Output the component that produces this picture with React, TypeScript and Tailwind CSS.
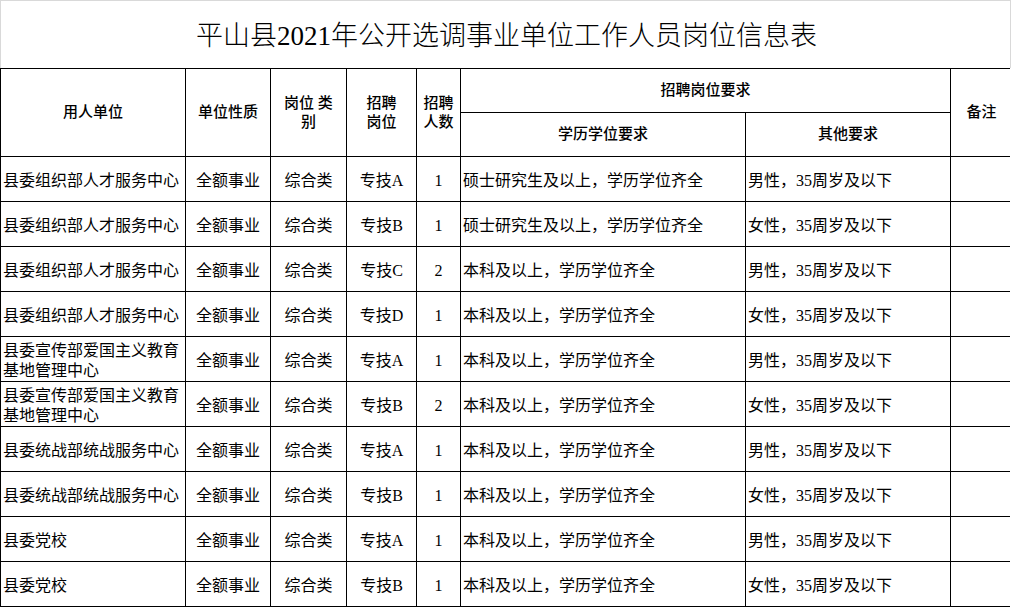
const font = { fontFamily: '"Liberation Serif", "Noto Sans CJK SC", serif' };

type Row = {
  unit: string;
  kind: string;
  cat: string;
  post: string;
  num: string;
  edu: string;
  other: string;
};

const edu1 = '硕士研究生及以上，学历学位齐全';
const edu2 = '本科及以上，学历学位齐全';

const rows: Row[] = [
  { unit: '县委组织部人才服务中心', kind: '全额事业', cat: '综合类', post: '专技A', num: '1', edu: edu1, other: '男性，35周岁及以下' },
  { unit: '县委组织部人才服务中心', kind: '全额事业', cat: '综合类', post: '专技B', num: '1', edu: edu1, other: '女性，35周岁及以下' },
  { unit: '县委组织部人才服务中心', kind: '全额事业', cat: '综合类', post: '专技C', num: '2', edu: edu2, other: '男性，35周岁及以下' },
  { unit: '县委组织部人才服务中心', kind: '全额事业', cat: '综合类', post: '专技D', num: '1', edu: edu2, other: '女性，35周岁及以下' },
  { unit: '县委宣传部爱国主义教育\n基地管理中心', kind: '全额事业', cat: '综合类', post: '专技A', num: '1', edu: edu2, other: '男性，35周岁及以下' },
  { unit: '县委宣传部爱国主义教育\n基地管理中心', kind: '全额事业', cat: '综合类', post: '专技B', num: '2', edu: edu2, other: '女性，35周岁及以下' },
  { unit: '县委统战部统战服务中心', kind: '全额事业', cat: '综合类', post: '专技A', num: '1', edu: edu2, other: '男性，35周岁及以下' },
  { unit: '县委统战部统战服务中心', kind: '全额事业', cat: '综合类', post: '专技B', num: '1', edu: edu2, other: '女性，35周岁及以下' },
  { unit: '县委党校', kind: '全额事业', cat: '综合类', post: '专技A', num: '1', edu: edu2, other: '男性，35周岁及以下' },
  { unit: '县委党校', kind: '全额事业', cat: '综合类', post: '专技B', num: '1', edu: edu2, other: '女性，35周岁及以下' },
];

const th = 'border border-black text-center align-middle text-[15px] leading-[19px] font-medium text-black';
const td = 'border border-black align-middle text-[16px] leading-[20px] text-black pt-[3px]';

export default function App() {
  return (
    <div className="w-[1011px] h-[607px] overflow-hidden bg-white" style={font}>
      <div className="h-[68px] w-[1011px] border-t border-l border-r border-[#d9d9d9] flex items-center justify-center">
        <h1 className="text-[27px] leading-none font-light text-black pt-[4px] pl-[2px]">平山县2021年公开选调事业单位工作人员岗位信息表</h1>
      </div>
      <div className="w-[1010px] overflow-hidden">
        <table className="table-fixed border-collapse w-[1012px]">
          <colgroup>
            <col className="w-[185px]" />
            <col className="w-[85px]" />
            <col className="w-[76px]" />
            <col className="w-[70px]" />
            <col className="w-[44px]" />
            <col className="w-[285px]" />
            <col className="w-[205px]" />
            <col className="w-[62px]" />
          </colgroup>
          <thead>
            <tr className="h-[44px]">
              <th rowSpan={2} className={th}>用人单位</th>
              <th rowSpan={2} className={th}>单位性质</th>
              <th rowSpan={2} className={th}>岗位 类<br />别</th>
              <th rowSpan={2} className={th}>招聘<br />岗位</th>
              <th rowSpan={2} className={th}>招聘<br />人数</th>
              <th colSpan={2} className={th}>招聘岗位要求</th>
              <th rowSpan={2} className={th}>备注</th>
            </tr>
            <tr className="h-[44px]">
              <th className={th}>学历学位要求</th>
              <th className={th}>其他要求</th>
            </tr>
          </thead>
          <tbody>
            {rows.map((r, i) => (
              <tr key={i} className="h-[45px]">
                <td className={`${td} text-left pl-[2px] whitespace-pre-line`}>{r.unit}</td>
                <td className={`${td} text-center`}>{r.kind}</td>
                <td className={`${td} text-center`}>{r.cat}</td>
                <td className={`${td} text-center`}>{r.post}</td>
                <td className={`${td} text-center`}>{r.num}</td>
                <td className={`${td} text-left pl-[2px]`}>{r.edu}</td>
                <td className={`${td} text-left pl-[2px]`}>{r.other}</td>
                <td className={td}></td>
              </tr>
            ))}
          </tbody>
        </table>
      </div>
    </div>
  );
}
